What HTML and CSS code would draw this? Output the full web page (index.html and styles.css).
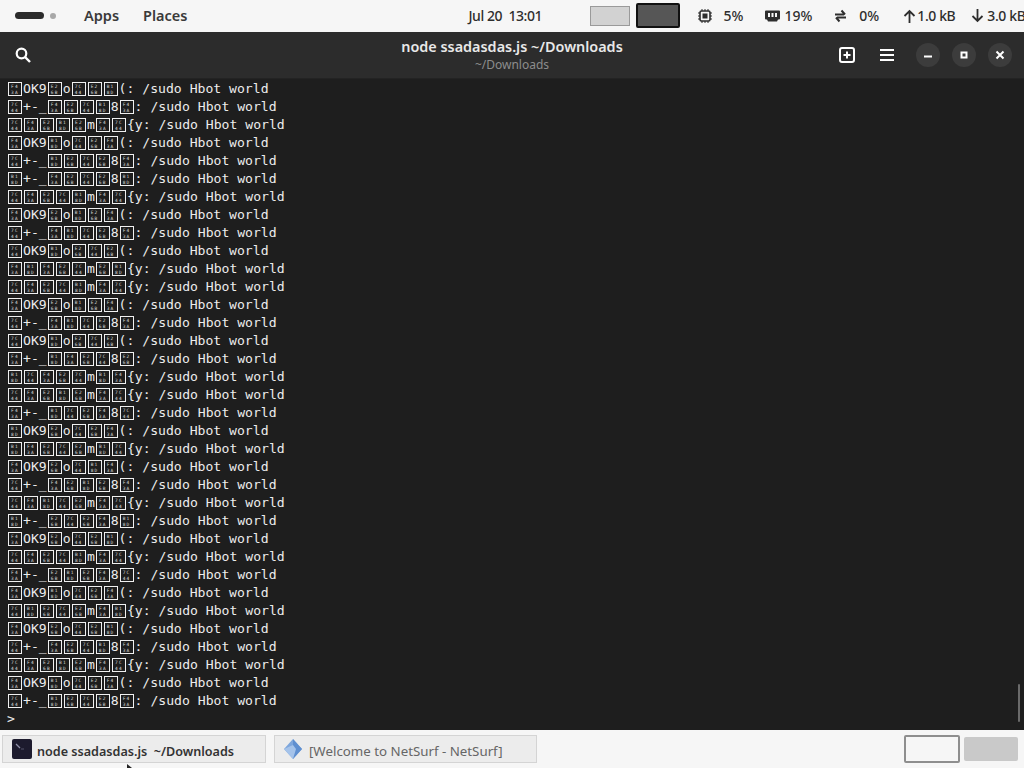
FILE: index.html
```html
<!DOCTYPE html>
<html lang="en">
<head>
<meta charset="utf-8">
<title>node ssadasdas.js ~/Downloads</title>
<link rel="stylesheet" href="styles.css">
</head>
<body>
<header class="panel">
  <span class="pill"></span><span class="dot"></span>
  <nav class="menus"><span>Apps</span><span>Places</span></nav>
  <time class="clock">Jul 20&nbsp; 13:01</time>
  <div class="spaces"><span class="ws"></span><span class="ws ws-on"></span></div>
  <div class="stat stat-cpu">
    <svg width="16" height="16" viewBox="0 0 16 16"><path d="M5 1v14M8 1v14M11 1v14M1 5h14M1 8h14M1 11h14" stroke="#2e2e2e" stroke-width="1"/><rect x="3" y="3" width="10" height="10" rx="1.5" fill="#f6f6f6" stroke="#2e2e2e" stroke-width="1.6"/><rect x="5.5" y="5.5" width="5" height="5" fill="#2e2e2e"/></svg>
    <span>5%</span>
  </div>
  <div class="stat stat-ram">
    <svg width="17" height="14" viewBox="0 0 17 14"><path d="M2 1.5h13a1 1 0 0 1 1 1v7a1 1 0 0 1-1 1h-1l-1 2H4l-1-2H2a1 1 0 0 1-1-1v-7a1 1 0 0 1 1-1z" fill="#2e2e2e"/><path d="M4 4h2v4H4zM7.500 4h2v4h-2zM11 4h2v4h-2z" fill="#f6f6f6"/></svg>
    <span>19%</span>
  </div>
  <div class="stat stat-swap">
    <svg width="17" height="16" viewBox="0 0 17 16"><path d="M3 6.500h9M9.500 2.500l3.500 4M14 9.500H5M7.500 13.500L4 9.500" fill="none" stroke="#2e2e2e" stroke-width="2"/></svg>
    <span>0%</span>
  </div>
  <div class="stat stat-up">
    <svg width="13" height="14" viewBox="0 0 13 14"><path d="M6.500 14V2M1.500 7l5-5 5 5" fill="none" stroke="#2e2e2e" stroke-width="1.800"/></svg>
    <span>1.0 kB</span>
  </div>
  <div class="stat stat-down">
    <svg width="13" height="14" viewBox="0 0 13 14"><path d="M6.500 0v12M1.500 7l5 5 5-5" fill="none" stroke="#2e2e2e" stroke-width="1.800"/></svg>
    <span>3.0 kB</span>
  </div>
</header>

<section class="window">
  <div class="titlebar">
    <div class="tb-left">
      <svg width="16" height="16" viewBox="0 0 16 16"><circle cx="6.500" cy="6.500" r="4.800" fill="none" stroke="#fff" stroke-width="2.200"/><path d="M10 10l5 5" stroke="#fff" stroke-width="2.400"/></svg>
    </div>
    <div class="tb-title"><strong>node ssadasdas.js ~/Downloads</strong><small>~/Downloads</small></div>
    <div class="tb-right">
      <svg class="ic-new" width="16" height="16" viewBox="0 0 16 16"><rect x="1" y="1" width="14" height="14" rx="2" fill="none" stroke="#fff" stroke-width="2"/><path d="M8 4.500v7M4.500 8h7" stroke="#fff" stroke-width="2"/></svg>
      <svg class="ic-menu" width="14" height="12" viewBox="0 0 14 12"><path d="M0 1h14M0 6h14M0 11h14" stroke="#fff" stroke-width="2"/></svg>
      <span class="wb wb-min"><svg width="10" height="10" viewBox="0 0 10 10"><path d="M1 6.500h8" stroke="#fff" stroke-width="2"/></svg></span>
      <span class="wb wb-max"><svg width="10" height="10" viewBox="0 0 10 10"><rect x="2.500" y="2.500" width="5" height="5" fill="none" stroke="#fff" stroke-width="2"/></svg></span>
      <span class="wb wb-close"><svg width="10" height="10" viewBox="0 0 10 10"><path d="M1.500 1.500l7 7M8.500 1.500l-7 7" stroke="#fff" stroke-width="2"/></svg></span>
    </div>
  </div>
  <div class="term">
    <pre class="out"><i></i>OK9<i></i>o<i></i><i></i><i></i>(: /sudo Hbot world
<i></i>+-_<i></i><i></i><i></i><i></i>8<i></i>: /sudo Hbot world
<i></i><i></i><i></i><i></i><i></i>m<i></i><i></i>{y: /sudo Hbot world
<i></i>OK9<i></i>o<i></i><i></i><i></i>(: /sudo Hbot world
<i></i>+-_<i></i><i></i><i></i><i></i>8<i></i>: /sudo Hbot world
<i></i>+-_<i></i><i></i><i></i><i></i>8<i></i>: /sudo Hbot world
<i></i><i></i><i></i><i></i><i></i>m<i></i><i></i>{y: /sudo Hbot world
<i></i>OK9<i></i>o<i></i><i></i><i></i>(: /sudo Hbot world
<i></i>+-_<i></i><i></i><i></i><i></i>8<i></i>: /sudo Hbot world
<i></i>OK9<i></i>o<i></i><i></i><i></i>(: /sudo Hbot world
<i></i><i></i><i></i><i></i><i></i>m<i></i><i></i>{y: /sudo Hbot world
<i></i><i></i><i></i><i></i><i></i>m<i></i><i></i>{y: /sudo Hbot world
<i></i>OK9<i></i>o<i></i><i></i><i></i>(: /sudo Hbot world
<i></i>+-_<i></i><i></i><i></i><i></i>8<i></i>: /sudo Hbot world
<i></i>OK9<i></i>o<i></i><i></i><i></i>(: /sudo Hbot world
<i></i>+-_<i></i><i></i><i></i><i></i>8<i></i>: /sudo Hbot world
<i></i><i></i><i></i><i></i><i></i>m<i></i><i></i>{y: /sudo Hbot world
<i></i><i></i><i></i><i></i><i></i>m<i></i><i></i>{y: /sudo Hbot world
<i></i>+-_<i></i><i></i><i></i><i></i>8<i></i>: /sudo Hbot world
<i></i>OK9<i></i>o<i></i><i></i><i></i>(: /sudo Hbot world
<i></i><i></i><i></i><i></i><i></i>m<i></i><i></i>{y: /sudo Hbot world
<i></i>OK9<i></i>o<i></i><i></i><i></i>(: /sudo Hbot world
<i></i>+-_<i></i><i></i><i></i><i></i>8<i></i>: /sudo Hbot world
<i></i><i></i><i></i><i></i><i></i>m<i></i><i></i>{y: /sudo Hbot world
<i></i>+-_<i></i><i></i><i></i><i></i>8<i></i>: /sudo Hbot world
<i></i>OK9<i></i>o<i></i><i></i><i></i>(: /sudo Hbot world
<i></i><i></i><i></i><i></i><i></i>m<i></i><i></i>{y: /sudo Hbot world
<i></i>+-_<i></i><i></i><i></i><i></i>8<i></i>: /sudo Hbot world
<i></i>OK9<i></i>o<i></i><i></i><i></i>(: /sudo Hbot world
<i></i><i></i><i></i><i></i><i></i>m<i></i><i></i>{y: /sudo Hbot world
<i></i>OK9<i></i>o<i></i><i></i><i></i>(: /sudo Hbot world
<i></i>+-_<i></i><i></i><i></i><i></i>8<i></i>: /sudo Hbot world
<i></i><i></i><i></i><i></i><i></i>m<i></i><i></i>{y: /sudo Hbot world
<i></i>OK9<i></i>o<i></i><i></i><i></i>(: /sudo Hbot world
<i></i>+-_<i></i><i></i><i></i><i></i>8<i></i>: /sudo Hbot world
&gt;</pre>
    <span class="scroll"></span>
  </div>
</section>

<footer class="taskbar">
  <div class="task task-term">
    <svg width="20" height="20" viewBox="0 0 20 20"><rect width="20" height="20" rx="2" fill="#1d1b2e"/><path d="M4 5l4 4" stroke="#8f8fa8" stroke-width="1.200" fill="none"/><path d="M9 10h3" stroke="#55556a" stroke-width="1"/></svg>
    <span>node ssadasdas.js&nbsp; ~/Downloads</span>
  </div>
  <div class="task task-web">
    <svg width="22" height="22" viewBox="0 0 22 22"><path d="M11 1l9 10-9 10-9-10z" fill="#7da6dc"/><path d="M11 1l9 10-9 10z" fill="#5f8fd0"/><path d="M2 11l9-4 3 4-3 10z" fill="#a5c3ea"/></svg>
    <span>[Welcome to NetSurf - NetSurf]</span>
  </div>
  <div class="pager"><span class="page page-on"></span><span class="page"></span></div>
  <svg class="cursor" width="8" height="4" viewBox="0 0 8 4"><path d="M1 0l5 4H1z" fill="#222"/></svg>
</footer>
</body>
</html>
```

FILE: styles.css
```css
* { box-sizing: border-box; }
html, body { margin: 0; height: 100%; }
body {
  width: 1024px;
  height: 768px;
  overflow: hidden;
  display: flex;
  flex-direction: column;
  background: #f6f6f6;
  font-family: "Noto Sans", "Liberation Sans", sans-serif;
  color: #2e2e2e;
}

/* top panel */
.panel {
  flex: 0 0 32px;
  display: flex;
  align-items: center;
  padding: 0 0 1px 15px;
  background: #f6f6f6;
  font-size: 14px;
  font-weight: 500;
  white-space: nowrap;
  overflow: hidden;
}
.panel > * { flex-shrink: 0; }
.pill { width: 29px; height: 7px; border-radius: 4px; background: #2b2b2b; }
.dot { width: 6px; height: 6px; margin-left: 6px; border-radius: 50%; background: #a8a8a8; }
.menus { display: flex; gap: 24px; margin-left: 28px; font-size: 14.5px; font-weight: 600; color: #3a3a3a; padding-bottom: 1px; }
.clock { margin-left: 281px; width: 122px; letter-spacing: -0.45px; }
.spaces { display: flex; align-items: center; gap: 6px; }
.ws { width: 40px; height: 20px; background: #d2d2d2; border: 1px solid #9a9a9a; }
.ws-on { width: 44px; height: 25px; background: #565656; border: 2px solid #111; border-radius: 2px; }
.stat { display: flex; align-items: center; }
.stat-cpu { margin-left: 17px; gap: 10px; }
.stat-ram { margin-left: 21px; gap: 3px; }
.stat-swap { margin-left: 20px; gap: 10px; }
.stat-up { margin-left: 24px; gap: 1px; letter-spacing: -0.4px; }
.stat-down { margin-left: 16px; gap: 3px; letter-spacing: -0.4px; }

/* terminal window */
.window { flex: 1 1 auto; display: flex; flex-direction: column; min-height: 0; }
.titlebar {
  flex: 0 0 47px;
  display: grid;
  grid-template-columns: 1fr auto 1fr;
  align-items: center;
  background: #2c2c2c;
  border-bottom: 1px solid #232323;
  color: #fff;
}
.tb-left { display: flex; padding-left: 15px; }
.tb-title { display: flex; flex-direction: column; align-items: center; line-height: 18px; padding-top: 2px; }
.tb-title strong { font-size: 14.4px; font-weight: 600; color: #e8e8e8; }
.tb-title small { font-size: 12px; color: #8c8c8c; }
.tb-right { display: flex; align-items: center; justify-content: flex-end; padding-right: 12px; }
.ic-new { margin-right: 25px; }
.ic-menu { margin-right: 22px; }
.wb {
  width: 24px;
  height: 24px;
  margin-left: 12px;
  display: flex;
  align-items: center;
  justify-content: center;
  border-radius: 50%;
  background: #3c3c3c;
}
.ic-menu + .wb { margin-left: 0; }
.term {
  position: relative;
  flex: 1 1 auto;
  min-height: 0;
  padding: 1px 8px 0 7px;
  background: #1e1e1e;
  overflow: hidden;
}
.out {
  margin: 0;
  font-family: "DejaVu Sans Mono", "Liberation Mono", monospace;
  font-size: 13.12px;
  line-height: 18px;
  color: #ececec;
}
/* missing-glyph boxes: the tiny hex digits are decoration drawn by the stylesheet */
.out i {
  display: inline-block;
  width: 14px;
  height: 14px;
  margin: 0 1px;
  padding-top: 1px;
  vertical-align: -3px;
  border: 1px solid #f0f0f0;
  font-family: "DejaVu Sans Mono", monospace;
  font-style: normal;
  font-size: 4.5px;
  line-height: 5.5px;
  letter-spacing: 1.2px;
  text-align: center;
  color: #d8d8d8;
  overflow: hidden;
}
.out i::before { content: "F4\A 3A"; }
.out i:nth-of-type(2n)::before { content: "E2\A 6B"; }
.out i:nth-of-type(3n)::before { content: "7C\A 44"; }
.out i:nth-of-type(5n)::before { content: "B1\A 8D"; }
.scroll {
  position: absolute;
  right: 4px;
  bottom: 8px;
  width: 2px;
  height: 38px;
  border-radius: 1px;
  background: #6a6a6a;
}

/* bottom bar */
.taskbar {
  position: relative;
  flex: 0 0 38px;
  display: flex;
  align-items: center;
  padding: 0 6px 0 2px;
  background: #f6f6f6;
  font-size: 13.3px;
  white-space: nowrap;
}
.task {
  height: 28px;
  display: flex;
  align-items: center;
  border: 1px solid #d4d4d4;
  background: #ececec;
}
.task span { padding-top: 4px; }
.task-term { width: 264px; padding-left: 9px; gap: 5px; font-size: 12.6px; font-weight: 600; color: #333; }
.task-web { width: 263px; margin-left: 8px; padding-left: 7px; gap: 5px; color: #666; }
.pager { margin-left: auto; display: flex; align-items: center; gap: 4px; }
.page { width: 54px; height: 24px; background: #c9c9c9; border-radius: 2px; }
.page-on { width: 56px; height: 28px; background: #f6f6f6; border: 2px solid #8e8e8e; }
.cursor { position: absolute; left: 126px; bottom: 0; }
```
